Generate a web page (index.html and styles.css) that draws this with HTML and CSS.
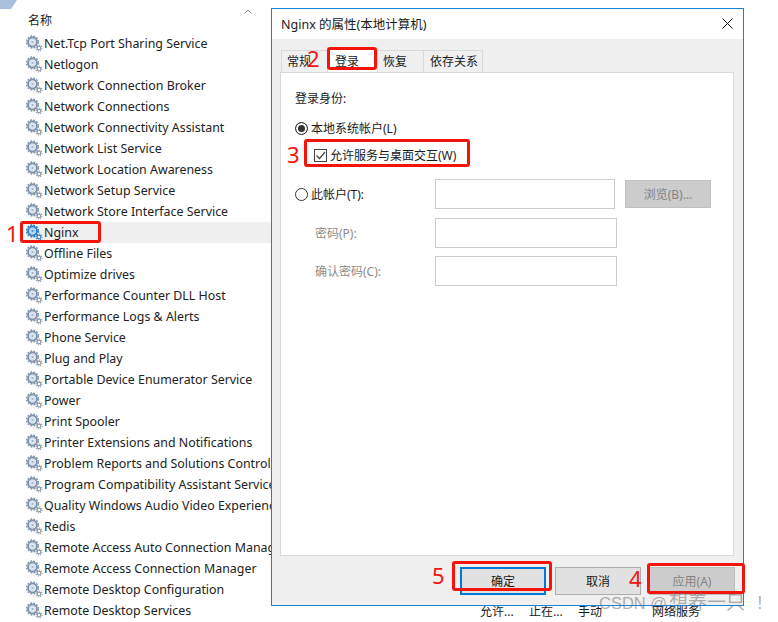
FILE: index.html
```html
<!DOCTYPE html>
<html lang="zh">
<head>
    <meta charset="UTF-8">
    <title>Nginx 的属性</title>
    <link rel="stylesheet" href="styles.css">
</head>
<body>
    <svg class="defs" width="0" height="0">
        <symbol id="gear" viewBox="0 0 17 17">
            <g fill="none">
                <circle cx="6.5" cy="7" r="4.4" stroke="#7c90a6" stroke-width="2"/>
                <circle cx="6.5" cy="7" r="5.9" stroke="#8597ac" stroke-width="1.5" stroke-dasharray="1.8 1.3"/>
                <circle cx="6.5" cy="7" r="2.6" stroke="#d3dfeb" stroke-width="1.6"/>
                <circle cx="6.5" cy="7" r="1.2" fill="#9fb2c6"/>
                <circle cx="13" cy="13" r="1.8" stroke="#8d9aa8" stroke-width="1.2"/>
                <circle cx="13" cy="13" r="3" stroke="#99a6b3" stroke-width="1.1" stroke-dasharray="1.2 1.1"/>
            </g>
        </symbol>
        <symbol id="gear-sel" viewBox="0 0 17 17">
            <g fill="none">
                <circle cx="6.5" cy="7" r="4.4" stroke="#2f7fc8" stroke-width="2"/>
                <circle cx="6.5" cy="7" r="5.9" stroke="#2f7fc8" stroke-width="1.5" stroke-dasharray="1.8 1.3"/>
                <circle cx="6.5" cy="7" r="2.6" stroke="#a9d0f0" stroke-width="1.6"/>
                <circle cx="6.5" cy="7" r="1.2" fill="#4a94d6"/>
                <circle cx="13" cy="13" r="1.8" stroke="#3a86cc" stroke-width="1.2"/>
                <circle cx="13" cy="13" r="3" stroke="#3a86cc" stroke-width="1.1" stroke-dasharray="1.2 1.1"/>
            </g>
        </symbol>
    </svg>

    <div class="corner"></div>

    <!-- liste des services -->
    <div class="services">
        <div class="col-head">
            <span>名称</span>
            <svg class="sort" width="8" height="5" viewBox="0 0 8 5"><path d="M0.5 4.5 L4 1 L7.5 4.5" fill="none" stroke="#8a8a8a"/></svg>
        </div>
        <ul class="service-list">
            <li><svg class="gear"><use href="#gear"/></svg>Net.Tcp Port Sharing Service</li>
            <li><svg class="gear"><use href="#gear"/></svg>Netlogon</li>
            <li><svg class="gear"><use href="#gear"/></svg>Network Connection Broker</li>
            <li><svg class="gear"><use href="#gear"/></svg>Network Connections</li>
            <li><svg class="gear"><use href="#gear"/></svg>Network Connectivity Assistant</li>
            <li><svg class="gear"><use href="#gear"/></svg>Network List Service</li>
            <li><svg class="gear"><use href="#gear"/></svg>Network Location Awareness</li>
            <li><svg class="gear"><use href="#gear"/></svg>Network Setup Service</li>
            <li><svg class="gear"><use href="#gear"/></svg>Network Store Interface Service</li>
            <li class="selected"><svg class="gear"><use href="#gear-sel"/></svg>Nginx</li>
            <li><svg class="gear"><use href="#gear"/></svg>Offline Files</li>
            <li><svg class="gear"><use href="#gear"/></svg>Optimize drives</li>
            <li><svg class="gear"><use href="#gear"/></svg>Performance Counter DLL Host</li>
            <li><svg class="gear"><use href="#gear"/></svg>Performance Logs &amp; Alerts</li>
            <li><svg class="gear"><use href="#gear"/></svg>Phone Service</li>
            <li><svg class="gear"><use href="#gear"/></svg>Plug and Play</li>
            <li><svg class="gear"><use href="#gear"/></svg>Portable Device Enumerator Service</li>
            <li><svg class="gear"><use href="#gear"/></svg>Power</li>
            <li><svg class="gear"><use href="#gear"/></svg>Print Spooler</li>
            <li><svg class="gear"><use href="#gear"/></svg>Printer Extensions and Notifications</li>
            <li><svg class="gear"><use href="#gear"/></svg>Problem Reports and Solutions Control</li>
            <li><svg class="gear"><use href="#gear"/></svg>Program Compatibility Assistant Service</li>
            <li><svg class="gear"><use href="#gear"/></svg>Quality Windows Audio Video Experience</li>
            <li><svg class="gear"><use href="#gear"/></svg>Redis</li>
            <li><svg class="gear"><use href="#gear"/></svg>Remote Access Auto Connection Manager</li>
            <li><svg class="gear"><use href="#gear"/></svg>Remote Access Connection Manager</li>
            <li><svg class="gear"><use href="#gear"/></svg>Remote Desktop Configuration</li>
            <li><svg class="gear"><use href="#gear"/></svg>Remote Desktop Services</li>
        </ul>
    </div>

    <!-- ligne visible sous la fenêtre -->
    <div class="under-row">
        <span class="u1">允许...</span>
        <span class="u2">止在...</span>
        <span class="u3">手动</span>
        <span class="u4">网络服务</span>
    </div>

    <!-- fenêtre des propriétés -->
    <div class="dialog">
        <div class="titlebar">
            <span>Nginx 的属性(本地计算机)</span>
            <svg class="close" width="11" height="11" viewBox="0 0 11 11"><path d="M0.5 0.5 L10.5 10.5 M10.5 0.5 L0.5 10.5" stroke="#111" fill="none"/></svg>
        </div>
        <div class="dialog-body">
            <div class="tabs">
                <div class="tab tab-general">常规</div>
                <div class="tab active">登录</div>
                <div class="tab tab-recovery">恢复</div>
                <div class="tab tab-deps">依存关系</div>
            </div>
            <div class="panel">
                <p class="label">登录身份:</p>
                <div class="option local">
                    <span class="radio checked"></span>本地系统帐户(L)
                </div>
                <div class="option interact">
                    <span class="check">
                        <svg width="11" height="11" viewBox="0 0 11 11"><path d="M1.5 5.5 L4.5 8.5 L10 2" fill="none" stroke="#444" stroke-width="1.2"/></svg>
                    </span>允许服务与桌面交互(W)
                </div>
                <div class="field-row account">
                    <div class="field-label"><span class="radio"></span>此帐户(T):</div>
                    <div class="input short"></div>
                    <div class="btn disabled">浏览(B)...</div>
                </div>
                <div class="field-row pwd">
                    <div class="field-label muted">密码(P):</div>
                    <div class="input"></div>
                </div>
                <div class="field-row pwd-confirm">
                    <div class="field-label muted">确认密码(C):</div>
                    <div class="input"></div>
                </div>
            </div>
            <div class="actions">
                <div class="btn default">确定</div>
                <div class="btn">取消</div>
                <div class="btn disabled">应用(A)</div>
            </div>
        </div>
    </div>

    <!-- annotations rouges -->
    <div class="mark box-nginx"></div>
    <div class="mark box-tab"></div>
    <div class="mark box-check"></div>
    <div class="mark box-ok"></div>
    <div class="mark box-apply"></div>
    <span class="num n1">1</span>
    <span class="num n2">2</span>
    <span class="num n3">3</span>
    <span class="num n4">4</span>
    <span class="num n5">5</span>

    <div class="watermark">CSDN @<span class="wm-cjk">想养一只</span> ！</div>
</body>
</html>
```

FILE: styles.css
```css
* {
    box-sizing: border-box;
}
body {
    margin: 0;
    width: 778px;
    height: 622px;
    position: relative;
    overflow: hidden;
    background: #fff;
    color: #1a1a1a;
    font-family: "Noto Sans", "Noto Sans CJK SC", sans-serif;
    font-size: 12px;
}
.defs {
    position: absolute;
}
.corner {
    position: absolute;
    left: 0;
    top: 0;
    width: 17px;
    height: 9px;
    background: #a9c0dc;
    clip-path: polygon(0 0, 100% 0, 65% 100%, 0 100%);
}

/* liste */
.services {
    width: 271px;
    padding-left: 26px;
    overflow: hidden;
}
.col-head {
    height: 33px;
    padding: 12px 0 0 2px;
    display: flex;
    justify-content: space-between;
    align-items: flex-start;
    line-height: 18px;
}
.sort {
    margin-right: 19px;
    position: relative;
    top: -3px;
}
.service-list {
    list-style: none;
    margin: 0;
    padding: 0;
}
.service-list li {
    height: 21px;
    line-height: 21px;
    white-space: nowrap;
    display: flex;
    align-items: center;
    font-size: 12.4px;
    color: #222;
}
.service-list li.selected {
    background: #f0f0f0;
}
.gear {
    width: 17px;
    height: 17px;
    margin-right: 1px;
    flex: none;
}

/* ligne du dessous */
.under-row {
    position: absolute;
    left: 0;
    top: 602px;
    width: 778px;
    height: 19px;
    font-size: 12px;
    line-height: 19px;
}
.under-row span {
    position: absolute;
    top: 0;
}
.u1 { left: 480px; }
.u2 { left: 529px; }
.u3 { left: 578px; }
.u4 { left: 652px; }

/* fenêtre */
.dialog {
    position: absolute;
    left: 271px;
    top: 8px;
    width: 473px;
    height: 598px;
    border: 1px solid #1883d7;
    background: #f0f0f0;
    display: flex;
    flex-direction: column;
}
.titlebar {
    height: 30px;
    flex: none;
    background: #fff;
    display: flex;
    align-items: center;
    justify-content: space-between;
    padding: 0 10px 2px 9px;
    font-size: 12.5px;
}
.dialog-body {
    flex: 1;
    padding: 11px 9px 0 8px;
    display: flex;
    flex-direction: column;
}
.tabs {
    display: flex;
    height: 22px;
    padding-left: 1px;
    position: relative;
    z-index: 1;
}
.tab {
    border: 1px solid #d9d9d9;
    border-bottom: none;
    background: #f0f0f0;
    padding-left: 5px;
    width: 47px;
    margin-right: -1px;
    line-height: 22px;
    font-size: 12px;
}
.tab-deps {
    width: 60px;
    padding-left: 6px;
}
.tab.active {
    background: #fff;
    width: 51px;
    height: 24px;
    margin-top: -2px;
    padding: 2px 0 0 7px;
    z-index: 2;
}
.panel {
    height: 484px;
    flex: none;
    background: #fff;
    border: 1px solid #d9d9d9;
    padding: 0 21px 0 14px;
    display: flex;
    flex-direction: column;
}
.label {
    margin: 17px 0 0;
    line-height: 18px;
}
.option {
    display: flex;
    align-items: center;
    height: 18px;
}
.local {
    margin-top: 11px;
}
.interact {
    margin: 9px 0 0 19px;
}
.radio {
    width: 13px;
    height: 13px;
    border: 1px solid #333;
    border-radius: 50%;
    margin-right: 3px;
    flex: none;
    display: inline-block;
}
.radio.checked {
    background: #333;
    box-shadow: inset 0 0 0 2px #fff;
}
.check {
    width: 13px;
    height: 13px;
    border: 1px solid #444;
    margin-right: 3px;
    display: flex;
    align-items: center;
    justify-content: center;
}
.field-row {
    display: flex;
    align-items: center;
}
.account {
    margin-top: 15px;
}
.pwd {
    margin-top: 9px;
}
.pwd-confirm {
    margin-top: 8px;
}
.field-label {
    width: 140px;
    display: flex;
    align-items: center;
}
.field-label.muted {
    color: #8c8c8c;
    padding-left: 20px;
}
.input {
    width: 182px;
    height: 30px;
    border: 1px solid #ccc;
    background: #fff;
}
.input.short {
    width: 180px;
    margin-right: 10px;
}
.btn {
    width: 86px;
    height: 28px;
    border: 1px solid #adadad;
    background: #e1e1e1;
    display: flex;
    align-items: center;
    justify-content: center;
}
.btn.disabled {
    background: #ccc;
    border-color: #bfbfbf;
    color: #838383;
}
.actions {
    display: flex;
    justify-content: flex-end;
    gap: 8px;
    padding: 11px 0 0;
    margin-right: -1px;
}
.btn.default {
    border: 2px solid #0078d7;
    margin-right: 1px;
}

/* annotations */
.mark {
    position: absolute;
    z-index: 5;
    border: 3px solid #f5140c;
    border-radius: 3px;
}
.box-nginx { left: 20px; top: 221px; width: 81px; height: 22px; }
.box-tab { left: 327px; top: 47px; width: 50px; height: 23px; }
.box-check { left: 304px; top: 139px; width: 166px; height: 28px; }
.box-ok { left: 452px; top: 561px; width: 100px; height: 30px; }
.box-apply { left: 647px; top: 563px; width: 98px; height: 31px; }
.num {
    position: absolute;
    z-index: 5;
    color: #f5140c;
    font-size: 22px;
    line-height: 24px;
}
.n1 { left: 6px; top: 221px; }
.n2 { left: 307px; top: 46px; }
.n3 { left: 287px; top: 142px; }
.n4 { left: 629px; top: 566px; }
.n5 { left: 432px; top: 563px; }
.watermark {
    position: absolute;
    z-index: 6;
    left: 599px;
    top: 591px;
    font-size: 16.5px;
    line-height: 24px;
    white-space: nowrap;
    color: rgba(110, 110, 110, 0.55);
    font-family: "Liberation Sans", "Noto Sans CJK SC", sans-serif;
}
.wm-cjk {
    font-size: 19px;
    margin: 0 6px 0 2px;
}
```
